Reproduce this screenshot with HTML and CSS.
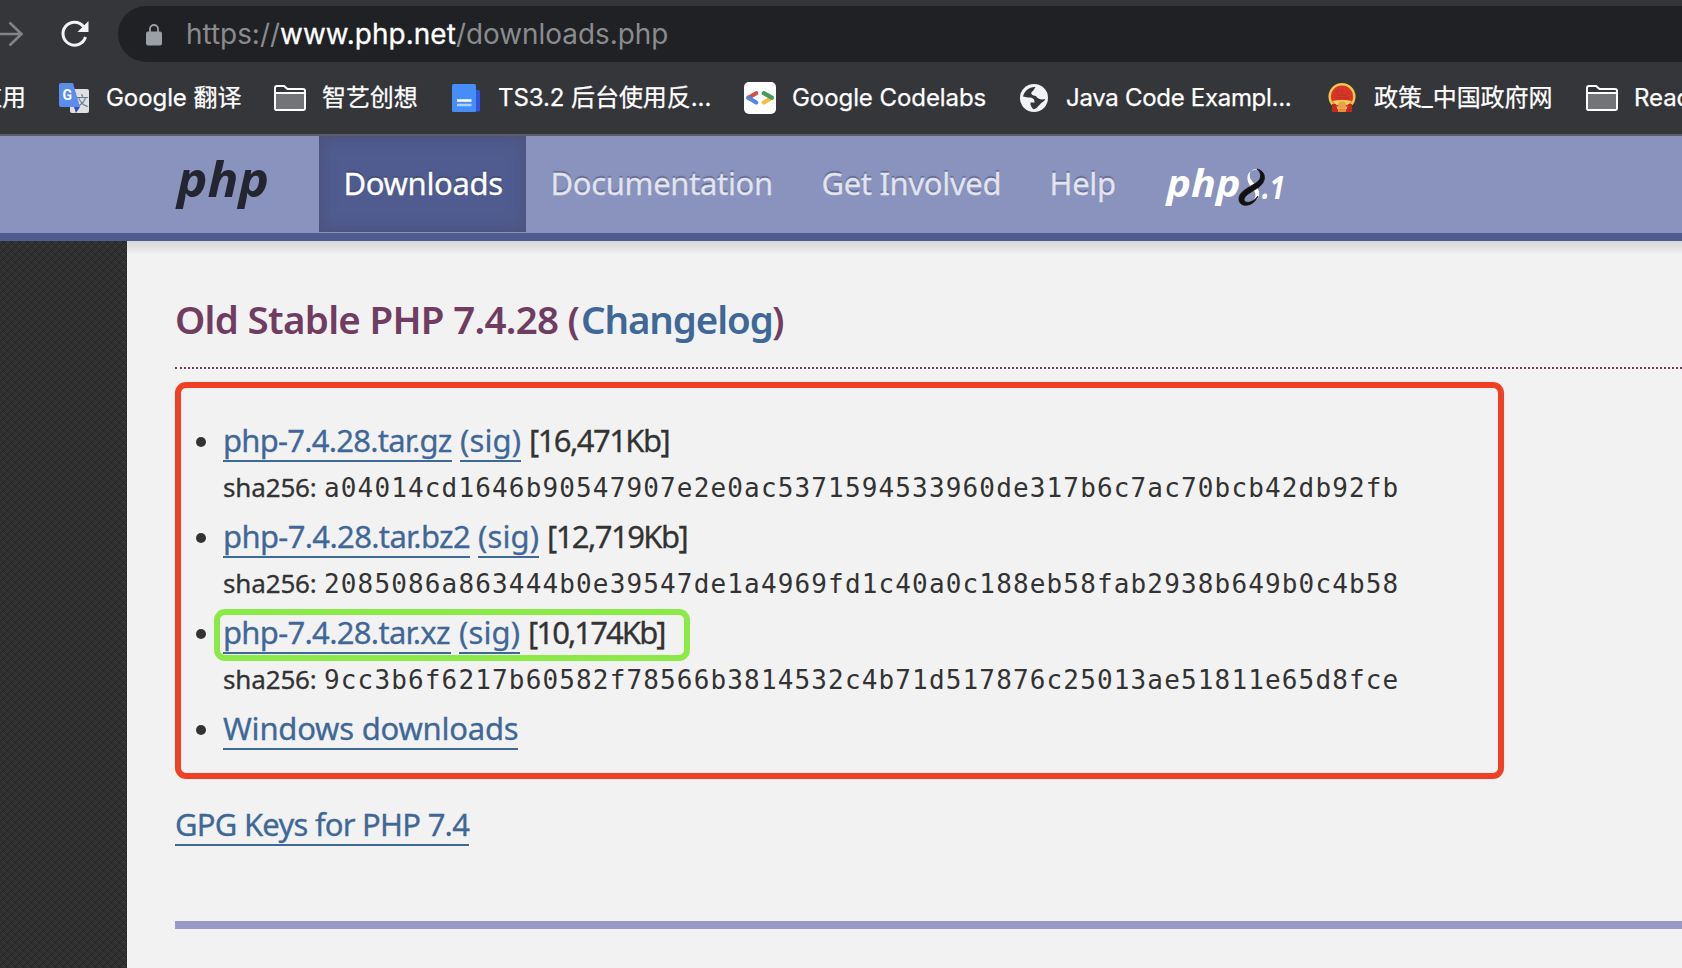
FILE: index.html
```html
<!DOCTYPE html>
<html lang="en">
<head>
<meta charset="utf-8">
<title>PHP: Downloads</title>
<link rel="stylesheet" href="styles.css">
</head>
<body>
<div class="window">
  <div class="toolbar">
    <svg class="forward" width="24" height="28" viewBox="0 0 24 28"><path d="M-2 14H21M9.500 2.500L21.500 14L9.500 25.500" fill="none" stroke="#828386" stroke-width="2.600"/></svg>
    <svg class="reload" width="28" height="28" viewBox="0 0 28 28"><path d="M22.500 6.500A11.500 11.500 0 1 0 24.500 17" fill="none" stroke="#f1f3f4" stroke-width="3"/><path d="M27.500 1V12H16.500Z" fill="#f1f3f4"/></svg>
    <div class="omnibox">
      <svg class="lock" width="16" height="22" viewBox="0 0 16 22"><rect y="7.500" width="16" height="14" rx="2" fill="#9aa0a6"/><path d="M4 8V5a4 4 0 0 1 8 0v3" fill="none" stroke="#9aa0a6" stroke-width="1.800"/></svg>
      <span class="url">https://<span class="host">www.php.net</span>/downloads.php</span>
    </div>
  </div>
  <div class="bookmarks">
    <div class="bm bm-apps"><span>应用</span></div>
    <div class="bm bm-translate">
      <svg width="30" height="30" viewBox="0 0 30 30"><rect x="11" y="6" width="19" height="24" rx="2" fill="#e0e0e0"/><path d="M15 24h6l-4 6z" fill="#3a4bc0"/><text x="16.500" y="22" class="glyph-wen">文</text><path d="M2 0H14L21 24H2a2 2 0 0 1-2-2V2a2 2 0 0 1 2-2Z" fill="#5b8def"/><text x="3.500" y="17.300" class="glyph-g">G</text></svg>
      <span>Google 翻译</span>
    </div>
    <div class="bm bm-folder1">
      <svg width="32" height="26" viewBox="0 0 32 26"><path d="M1 24V3a2 2 0 0 1 2-2H10l3.500 3H29a2 2 0 0 1 2 2V23a2 2 0 0 1-2 2H2Z" fill="#35363a" stroke="#fff" stroke-width="2"/><path d="M2 8H30V24H2Z" fill="#737477"/><path d="M1 8H31" stroke="#fff" stroke-width="2"/></svg>
      <span>智艺创想</span>
    </div>
    <div class="bm bm-doc">
      <svg width="28" height="28" viewBox="0 0 28 28"><rect x="19" y="6" width="9" height="21.500" rx="1.500" fill="#2f55e0"/><rect width="24" height="28" rx="1.500" fill="#468df8"/><path d="M5 16.500H19.500" stroke="#fff" stroke-width="2.500"/><path d="M5 21H19.500" stroke="#a9d2ff" stroke-width="2.500"/></svg>
      <span>TS3.2 后台使用反...</span>
    </div>
    <div class="bm bm-code">
      <svg width="32" height="32" viewBox="0 0 32 32"><rect width="32" height="32" rx="5" fill="#fff"/><g fill="none" stroke-width="4.200" stroke-linecap="round"><path d="M19.800 20.500L27.500 16" stroke="#f4bd3f"/><path d="M19.800 11.200L27.800 15.700" stroke="#429a5b"/><path d="M12.200 11.200L4.500 15.700" stroke="#d85040"/><path d="M4.200 15.800L12.200 20.500" stroke="#4f86ec"/></g></svg>
      <span>Google Codelabs</span>
    </div>
    <div class="bm bm-globe">
      <svg width="28" height="28" viewBox="0 0 28 28"><circle cx="14" cy="14" r="14" fill="#f1f3f4"/><path d="M15.500 3C9 2.600 4.500 7 3 12.500L8 13.500C12 13 15 15 14.500 18.500H10.500V20.500C11 23 13 25 13.500 25.200C17 25 18 22 20 20.500C22 17.500 24.500 18 25 15C22 16 17 15 16 12C11 12 10 8 13 7Z" fill="#35363a"/></svg>
      <span>Java Code Exampl...</span>
    </div>
    <div class="bm bm-gov">
      <svg width="28" height="28" viewBox="0 0 28 28"><path d="M4 19h20v9H4z" fill="#c92820"/><circle cx="14" cy="12.500" r="12.300" fill="#dc3426" stroke="#edc64e" stroke-width="2.500"/><path d="M8 9l3-3M14 5v4M19 8l2 2M7 14h14M9 11h10" stroke="#b93524" stroke-width="1.500"/><path d="M4 17q10-2 20 0l-4 4H8Z" fill="#f3cf57"/><path d="M4 20h4l2 8H4zM24 20h-4l-2 8h6z" fill="#c92820"/><circle cx="14" cy="21.500" r="4" fill="#e7a14a"/><path d="M10 25h8v3h-8z" fill="#e48e3e"/></svg>
      <span>政策_中国政府网</span>
    </div>
    <div class="bm bm-folder2">
      <svg width="32" height="26" viewBox="0 0 32 26"><path d="M1 24V3a2 2 0 0 1 2-2H10l3.500 3H29a2 2 0 0 1 2 2V23a2 2 0 0 1-2 2H2Z" fill="#35363a" stroke="#fff" stroke-width="2"/><path d="M2 8H30V24H2Z" fill="#737477"/><path d="M1 8H31" stroke="#fff" stroke-width="2"/></svg>
      <span>Read</span>
    </div>
  </div>
  <nav class="nav">
    <a class="brand"><svg width="98" height="50" viewBox="0 0 98 50"><text class="wordmark" x="2" y="36" textLength="92" lengthAdjust="spacingAndGlyphs">php</text></svg></a>
    <a class="item active"><span class="t t-dl">Downloads</span></a>
    <a class="item"><span class="t t-doc">Documentation</span></a>
    <a class="item"><span class="t t-get">Get Involved</span></a>
    <a class="item"><span class="t t-help">Help</span></a>
    <a class="release"><svg width="124" height="42" viewBox="0 0 124 42"><text class="wordmark-sm" x="1.500" y="28" textLength="74" lengthAdjust="spacingAndGlyphs">php</text><path d="M95 1C85-2 82 6 87 12C91 17 97 23 93 29C91 32 88 34 85 34C92 30 92 24 87 19C80 12 80-1 95 1Z" fill="#fff"/><path d="M92 0C101 2 102 12 94 18C87 23 79 26 79 31C80 35 88 34 93 27C89 38 75 39 74 31C73 23 83 19 91 14C97 10 97 4 92 0Z" fill="#111" stroke="#111" stroke-width=".8"/><text class="wordmark-ver" x="97" y="30" textLength="23" lengthAdjust="spacingAndGlyphs">.1</text></svg></a>
  </nav>
  <div class="page">
    <aside class="side"></aside>
    <main class="content">
      <h3 class="title"><span class="t t-h1">Old Stable PHP 7.4.28 (</span><a class="t t-h2">Changelog</a><span class="t">)</span></h3>
      <div class="frame">
        <ul class="files">
          <li><div class="row"><a class="link"><span class="t t-f1">php-7.4.28.tar.gz</span></a><a class="link"><span class="t t-sig">(sig)</span></a><span class="t t-z1">[16,471Kb]</span></div>
            <div class="sum"><span class="t t-sha">sha256:</span><span class="t t-hash">a04014cd1646b90547907e2e0ac5371594533960de317b6c7ac70bcb42db92fb</span></div></li>
          <li><div class="row"><a class="link"><span class="t t-f2">php-7.4.28.tar.bz2</span></a><a class="link"><span class="t t-sig">(sig)</span></a><span class="t t-z1">[12,719Kb]</span></div>
            <div class="sum"><span class="t t-sha">sha256:</span><span class="t t-hash">2085086a863444b0e39547de1a4969fd1c40a0c188eb58fab2938b649b0c4b58</span></div></li>
          <li><div class="row"><a class="link"><span class="t t-f3">php-7.4.28.tar.xz</span></a><a class="link"><span class="t t-sig">(sig)</span></a><span class="t t-z3">[10,174Kb]</span><i class="highlight"></i></div>
            <div class="sum"><span class="t t-sha">sha256:</span><span class="t t-hash">9cc3b6f6217b60582f78566b3814532c4b71d517876c25013ae51811e65d8fce</span></div></li>
          <li><div class="row"><a class="link"><span class="t t-win">Windows downloads</span></a></div></li>
        </ul>
      </div>
      <div class="gpg"><a class="link"><span class="t t-gpg">GPG Keys for PHP 7.4</span></a></div>
      <div class="rule"></div>
    </main>
  </div>
</div>
</body>
</html>
```
FILE: styles.css
```css
* { box-sizing: border-box; }
body { margin: 0; overflow: hidden; font-family: "Noto Sans", "Noto Sans CJK SC", sans-serif; }
.window { width: 1682px; height: 968px; overflow: hidden; display: flex; flex-direction: column; background: #f2f2f2; }
svg { display: block; flex: none; overflow: visible; }
.t { display: inline-block; white-space: nowrap; }

.toolbar { height: 66px; flex: none; background: #35363a; display: flex; align-items: flex-start; }
.forward { margin-top: 20px; }
.reload { margin: 20px 0 0 37px; }
.omnibox { margin: 6px 0 0 29px; flex: 1; height: 56px; border-radius: 28px 0 0 28px; background: #202124; display: flex; align-items: center; padding-left: 28px; }
.lock { margin-top: 2px; }
.url { margin-left: 24px; font: 27.900px/56px Inter, sans-serif; color: #8a8b8e; white-space: nowrap; }
.host { color: #fff; -webkit-text-stroke: .3px #fff; letter-spacing: .08px; }

.bookmarks { height: 70px; flex: none; background: #35363a; border-bottom: 2px solid #5d5e61; display: flex; align-items: flex-start; overflow: hidden; font: 24px/64px Inter, "Noto Sans CJK SC", sans-serif; letter-spacing: -.07px; color: #fff; -webkit-text-stroke: .25px #fff; }
.bm { display: flex; align-items: center; height: 64px; flex: none; white-space: nowrap; }
.bm-apps { width: 59px; margin-left: -22px; margin-right: 22px; }
.bm-translate { width: 215px; gap: 17px; }
.bm-folder1 { width: 178px; gap: 16px; }
.bm-doc { width: 292px; gap: 18px; }
.bm-code { width: 276px; gap: 16px; }
.bm-globe { width: 308px; gap: 18px; letter-spacing: -.3px; }
.bm-gov { width: 258px; gap: 18px; }
.bm-folder2 { gap: 16px; }
.glyph-g { font: 700 14px Roboto, sans-serif; fill: #fff; stroke: none; }
.glyph-wen { font: 13px "Noto Sans CJK SC", sans-serif; fill: #607d8b; stroke: none; }

.nav { height: 105px; flex: none; background: #8993be; border-bottom: 8px solid #4f5b8f; display: flex; font: 31px/94px "Noto Sans", sans-serif; letter-spacing: -.34px; -webkit-text-stroke: .3px currentColor; }
.brand { padding: 25px 0 0 175px; width: 319px; flex: none; }
.wordmark, .wordmark-sm, .wordmark-ver { font: italic 700 48px "Noto Sans", sans-serif; letter-spacing: 0; fill: #232531; stroke: none; -webkit-text-stroke: 0; }
.wordmark-sm { font-size: 37px; fill: #fff; }
.wordmark-ver { font-size: 32px; fill: #fff; }
.item { height: 96px; padding: 0 24.500px; color: #e2e4ef; text-shadow: 0 -2px 1px rgba(40,45,80,.4); }
.active { background: #505c8f; color: #fff; box-shadow: inset 0 0 16px rgba(70,70,100,.6); }
.t-dl { width: 158px; }
.t-doc { width: 222px; }
.t-get { width: 179px; }
.t-help { width: 67px; }
.release { padding: 33px 0 0 24px; }

.page { flex: 1; display: flex; }
.side { width: 127px; flex: none; background-color: #333; background-image: repeating-linear-gradient(45deg, rgba(0,0,0,.28) 0 1px, transparent 1px 5.657px), repeating-linear-gradient(-45deg, rgba(0,0,0,.28) 0 1px, transparent 1px 5.657px); }
.content { flex: 1; padding: 48px 0 0 48px; color: #333; background: linear-gradient(#d7d7d7, #e3e3e3 7px, #f2f2f2 14px); }
.title { margin: 0; height: 80px; border-bottom: 2px dotted #703c61; display: flex; font: 600 38.500px/60px "Noto Sans", sans-serif; color: #703c61; }
.title a, .link { color: #3f6798; }
.t-h1 { letter-spacing: -.7px; width: 406px; }
.t-h2 { letter-spacing: -1.100px; width: 191px; }
.frame { margin-top: 13px; width: 1329px; height: 397px; border: 6px solid #ef4026; border-radius: 11px; }
.files { list-style: none; margin: 0; padding: 29px 0 0 42px; }
.row { height: 48px; display: flex; gap: 8px; align-items: flex-start; font: 31px/46px "Noto Sans", sans-serif; position: relative; -webkit-text-stroke: .3px currentColor; }
.row::before { content: ""; position: absolute; left: -27px; top: 20px; width: 10px; height: 10px; border-radius: 50%; background: #333; }
.link { display: block; height: 45px; border-bottom: 2px solid #3f6798; white-space: nowrap; line-height: 46px; }
.t-f1 { letter-spacing: -.76px; width: 229px; }
.t-f2 { letter-spacing: -.66px; width: 247px; }
.t-f3 { letter-spacing: -.7px; width: 228px; }
.t-sig { letter-spacing: .15px; width: 61px; }
.t-z1 { letter-spacing: -1.550px; }
.t-z3 { letter-spacing: -1.900px; }
.t-win { letter-spacing: -.22px; width: 295px; }
.t-gpg { letter-spacing: -.76px; width: 294px; }
.sum { height: 48px; display: flex; font: 26px/46px "Noto Sans", sans-serif; }
.t-sha { width: 101px; letter-spacing: -.15px; line-height: 44px; -webkit-text-stroke: .3px currentColor; }
.t-hash { font-family: "DejaVu Sans Mono", monospace; letter-spacing: 1.150px; }
.highlight { position: absolute; left: -9px; top: 0; width: 476px; height: 52px; border: 6px solid #8bea47; border-radius: 11px; }
.gpg { margin-top: 22px; height: 48px; display: flex; font: 31px/46px "Noto Sans", sans-serif; -webkit-text-stroke: .3px currentColor; }
.rule { margin-top: 72px; height: 8px; background: #9999c8; }
```
